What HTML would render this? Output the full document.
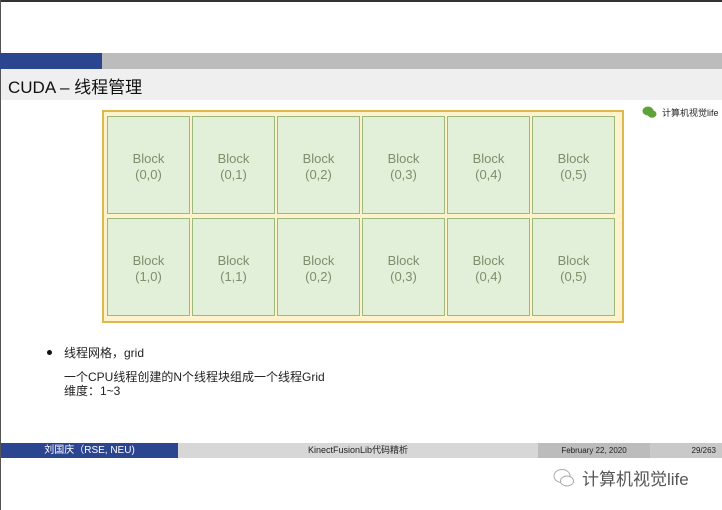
<!DOCTYPE html><html><head><meta charset="utf-8"><style>
body{margin:0;width:722px;height:510px;background:#fff;position:relative;overflow:hidden;font-family:"Liberation Sans","Noto Sans CJK SC",sans-serif}
div{position:absolute;box-sizing:border-box}
.c{width:83px;height:98px;background:#e2efd9;border:1px solid #9bb97a;color:#7d8f6c;font-size:13px;text-align:center;padding-top:34px;line-height:16px}
</style></head><body>
<div style="left:0;top:0;width:722px;height:2px;background:#333"></div>
<div style="left:0;top:0;width:1px;height:510px;background:#555"></div>
<div style="left:0;top:53px;width:102px;height:16px;background:#2b4590"></div>
<div style="left:102px;top:53px;width:620px;height:16px;background:#bcbcbc"></div>
<div style="left:1px;top:69px;width:721px;height:31px;background:#efefef"></div>
<div style="left:8px;top:73px;font-size:17px;color:#111">CUDA – 线程管理</div>
<div style="left:642px;top:105px;width:15px;height:12px"><svg width="15" height="12"><ellipse cx="6" cy="5" rx="5.5" ry="4.5" fill="#5ea33a"/><ellipse cx="10" cy="8" rx="4.5" ry="3.8" fill="#5ea33a"/></svg></div>
<div style="left:662px;top:106px;font-size:9px;color:#222">计算机视觉life</div>
<div style="left:102px;top:110px;width:522px;height:213px;background:#fff2cc;border:2px solid #dcb84f"></div>
<div class="c" style="left:107px;top:116px">Block<br>(0,0)</div>
<div class="c" style="left:192px;top:116px">Block<br>(0,1)</div>
<div class="c" style="left:277px;top:116px">Block<br>(0,2)</div>
<div class="c" style="left:362px;top:116px">Block<br>(0,3)</div>
<div class="c" style="left:447px;top:116px">Block<br>(0,4)</div>
<div class="c" style="left:532px;top:116px">Block<br>(0,5)</div>
<div class="c" style="left:107px;top:218px">Block<br>(1,0)</div>
<div class="c" style="left:192px;top:218px">Block<br>(1,1)</div>
<div class="c" style="left:277px;top:218px">Block<br>(0,2)</div>
<div class="c" style="left:362px;top:218px">Block<br>(0,3)</div>
<div class="c" style="left:447px;top:218px">Block<br>(0,4)</div>
<div class="c" style="left:532px;top:218px">Block<br>(0,5)</div>
<div style="left:47px;top:350px;width:5px;height:5px;border-radius:50%;background:#111"></div>
<div style="left:64px;top:344px;font-size:12px;color:#222">线程网格，grid</div>
<div style="left:64px;top:370px;font-size:12px;color:#222;line-height:14px">一个CPU线程创建的N个线程块组成一个线程Grid<br>维度：1~3</div>
<div style="left:1px;top:443px;width:177px;height:15px;background:#2b4590;color:#fff;font-size:10px;text-align:center;line-height:15px">刘国庆（RSE, NEU)</div>
<div style="left:178px;top:443px;width:360px;height:15px;background:#d7d7d7;color:#222;font-size:9px;text-align:center;line-height:15px">KinectFusionLib代码精析</div>
<div style="left:538px;top:443px;width:112px;height:15px;background:#bcbcbc;color:#222;font-size:8px;text-align:center;line-height:15px">February 22, 2020</div>
<div style="left:650px;top:443px;width:72px;height:15px;background:#c9c9c9;color:#222;font-size:8px;text-align:right;padding-right:6px;line-height:15px">29/263</div>
<div style="left:553px;top:467px;width:22px;height:22px"><svg width="22" height="22"><ellipse cx="9" cy="9" rx="8" ry="6.5" fill="none" stroke="#aaa"/><ellipse cx="14" cy="14" rx="6.5" ry="5" fill="#fff" stroke="#aaa"/></svg></div>
<div style="left:582px;top:465px;font-size:17px;color:#555">计算机视觉life</div>
</body></html>
